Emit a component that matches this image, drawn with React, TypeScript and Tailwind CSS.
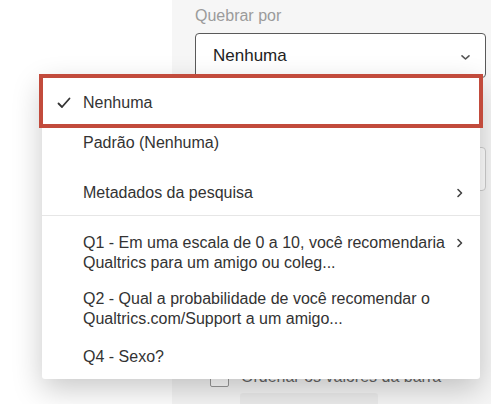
const ChevronRight = () => (
  <svg width="8" height="10" viewBox="0 0 8 10" fill="none" className="shrink-0">
    <path d="M2 1.5L5.5 5L2 8.5" stroke="#444" strokeWidth="1.6" strokeLinecap="round" strokeLinejoin="round" />
  </svg>
);

const ChevronDown = () => (
  <svg width="11" height="7" viewBox="0 0 11 7" fill="none" className="mt-[3px]">
    <path d="M2 1.8L5.5 5L9 1.8" stroke="#555" strokeWidth="1.6" strokeLinecap="round" strokeLinejoin="round" />
  </svg>
);

const Check = () => (
  <svg width="14" height="12" viewBox="0 0 14 12" fill="none">
    <path d="M1.5 6.5L5 10L12.5 1.5" stroke="#333" strokeWidth="1.8" strokeLinecap="round" strokeLinejoin="round" />
  </svg>
);

const BackgroundPanel = () => {
  return (
    <div className="flex-1 bg-[#f6f6f6] pl-[23px] pr-[5px] pt-[5px]">
      <div className="text-[16px] leading-[22px] text-[#9b9b9b]">Quebrar por</div>
      <div className="mt-[6px] h-[45px] border border-[#5a5a5a] rounded-[4px] bg-white flex items-center justify-between pl-[17px] pr-[14px]">
        <span className="text-[17px] text-[#222]">Nenhuma</span>
        <ChevronDown />
      </div>
      <div className="mt-[69px] h-[44px] border border-[#cfcfcf] rounded-[4px] bg-white" />
      <div className="mt-[176px] flex items-center gap-[12px] pl-[15px]">
        <div className="w-[19px] h-[19px] border border-[#9a9a9a] bg-white rounded-[2px]" />
        <span className="text-[16px] leading-[20px] text-[#666]">Ordenar os valores da barra</span>
      </div>
      <div className="mt-[6px] ml-[45px] w-[138px] h-[30px] rounded-[3px] bg-[#ececec]" />
    </div>
  );
};

const DropdownMenu = () => {
  return (
    <div className="absolute left-[42px] top-[76px] w-[438px] h-[303px] bg-white rounded-[3px] shadow-[0_10px_30px_rgba(0,0,0,0.22)] text-[16px] leading-[20px] text-[#333]">
      <div className="h-[54px] flex items-center pl-[15px]">
        <Check />
        <span className="ml-[12px]">Nenhuma</span>
      </div>
      <div className="h-[26px] flex items-center pl-[41px]">Padrão (Nenhuma)</div>
      <div className="pt-[27px] pb-[12px] pl-[41px] pr-[16px] flex items-center justify-between">
        <span>Metadados da pesquisa</span>
        <ChevronRight />
      </div>
      <div className="h-px bg-[#e6e6e6]" />
      <div className="pt-[17px] pl-[41px] pr-[16px] flex items-start justify-between">
        <span>
          Q1 - Em uma escala de 0 a 10, você recomendaria
          <br />
          Qualtrics para um amigo ou coleg...
        </span>
        <span className="mt-[5px]">
          <ChevronRight />
        </span>
      </div>
      <div className="pt-[16px] pl-[41px] pr-[16px]">
        Q2 - Qual a probabilidade de você recomendar o
        <br />
        Qualtrics.com/Support a um amigo...
      </div>
      <div className="pt-[18px] pl-[41px]">Q4 - Sexo?</div>
    </div>
  );
};

export default function App() {
  return (
    <div className="relative w-[491px] h-[404px] overflow-hidden bg-white flex font-['Liberation_Sans',Arial,sans-serif]">
      <div className="w-[172px] shrink-0 bg-white" />
      <BackgroundPanel />
      <DropdownMenu />
      <div className="absolute left-[39px] top-[74px] w-[444px] h-[54px] border-[4px] border-[#c24b3c]" />
    </div>
  );
}
